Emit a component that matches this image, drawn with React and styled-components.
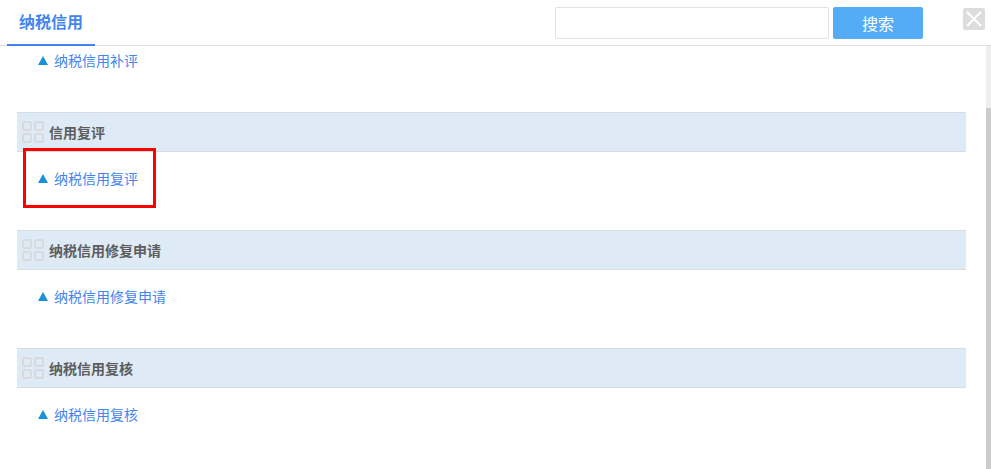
import styled, { createGlobalStyle } from 'styled-components';

const GlobalStyle = createGlobalStyle`
  html, body {
    margin: 0;
    padding: 0;
    height: 100%;
    overflow: hidden;
    background: #fff;
    font-family: "Liberation Sans", "Noto Sans CJK SC", sans-serif;
  }
`;

const Page = styled.div`
  position: relative;
  width: 991px;
  height: 469px;
  overflow: hidden;
`;

const Header = styled.div`
  box-sizing: border-box;
  height: 46px;
  border-bottom: 1px solid #ddd;
  padding-left: 7px;
  display: flex;
  align-items: flex-start;
`;

const Tab = styled.div`
  box-sizing: border-box;
  width: 88px;
  height: 46px;
  border-bottom: 2px solid #4285ee;
  padding-left: 12px;
  line-height: 45px;
  font-size: 16px;
  font-weight: bold;
  color: #4285ee;
`;

const SearchInput = styled.input`
  box-sizing: border-box;
  width: 274px;
  height: 32px;
  margin: 7px 0 0 460px;
  border: 1px solid #e3e3e3;
  border-radius: 2px;
  background: #fff;
  outline: none;
`;

const SearchButton = styled.button`
  width: 90px;
  height: 32px;
  margin: 7px 0 0 4px;
  padding: 0;
  border: none;
  border-radius: 2px;
  background: #53acf5;
  color: #fff;
  font-family: inherit;
  font-size: 16px;
`;

const CloseButton = styled.button`
  display: flex;
  align-items: center;
  justify-content: center;
  width: 22px;
  height: 22px;
  margin: 8px 0 0 40px;
  padding: 0;
  border: none;
  border-radius: 2px;
  background: #ddd;
`;

const Body = styled.div`
  display: flex;
  height: 423px;
`;

const Content = styled.div`
  flex: 1;
  padding: 0 20px 0 17px;
`;

const Section = styled.section`
  margin-bottom: 34px;
`;

const SectionTitle = styled.div`
  box-sizing: border-box;
  display: flex;
  align-items: center;
  gap: 5px;
  height: 40px;
  padding-left: 5px;
  background: #deeaf5;
  border-top: 1px solid #d8dde2;
  border-bottom: 1px solid #d8dde2;
  font-size: 14px;
  font-weight: bold;
  color: #5d5d5d;
`;

const LinkRow = styled.div`
  display: flex;
  align-items: center;
  gap: 6px;
  height: ${(p) => p.$height}px;
  margin-top: ${(p) => p.$top}px;
  margin-bottom: ${(p) => p.$bottom}px;
  padding-left: 21px;
  font-size: 14px;
  color: #4285ee;
`;

const Triangle = styled.span`
  width: 0;
  height: 0;
  border-left: 5px solid transparent;
  border-right: 5px solid transparent;
  border-bottom: 9px solid #1a90d9;
`;

const Scrollbar = styled.div`
  width: 5px;
  background: #eee;
  display: flex;
  flex-direction: column;
  justify-content: flex-end;
`;

const ScrollThumb = styled.div`
  height: 361px;
  background: #ccc;
`;

const Highlight = styled.div`
  position: absolute;
  left: 23px;
  top: 148px;
  box-sizing: border-box;
  width: 133px;
  height: 60px;
  border: 3px solid #f00;
`;

const GridIcon = () => (
  <svg width="22" height="22" viewBox="0 0 22 22" fill="none" stroke="#d9dadb" strokeWidth="2">
    <rect x="1" y="1" width="8" height="8" rx="1.5" />
    <rect x="13" y="1" width="8" height="8" rx="1.5" />
    <rect x="1" y="13" width="8" height="8" rx="1.5" />
    <rect x="13" y="13" width="8" height="8" rx="1.5" />
  </svg>
);

const sections = [
  { title: '信用复评', link: '纳税信用复评' },
  { title: '纳税信用修复申请', link: '纳税信用修复申请' },
  { title: '纳税信用复核', link: '纳税信用复核' },
];

const App = () => (
  <Page>
    <GlobalStyle />
    <Header>
      <Tab>纳税信用</Tab>
      <SearchInput />
      <SearchButton>搜索</SearchButton>
      <CloseButton aria-label="关闭">
        <svg width="18" height="18" viewBox="0 0 18 18" stroke="#fff" strokeWidth="2.2">
          <path d="M2 2 L16 16 M16 2 L2 16" />
        </svg>
      </CloseButton>
    </Header>
    <Body>
      <Content>
        <LinkRow $height={28} $top={0} $bottom={38}>
          <Triangle />
          纳税信用补评
        </LinkRow>
        {sections.map((s) => (
          <Section key={s.title}>
            <SectionTitle>
              <GridIcon />
              {s.title}
            </SectionTitle>
            <LinkRow $height={36} $top={8} $bottom={0}>
              <Triangle />
              {s.link}
            </LinkRow>
          </Section>
        ))}
      </Content>
      <Scrollbar>
        <ScrollThumb />
      </Scrollbar>
    </Body>
    <Highlight />
  </Page>
);

export default App;
